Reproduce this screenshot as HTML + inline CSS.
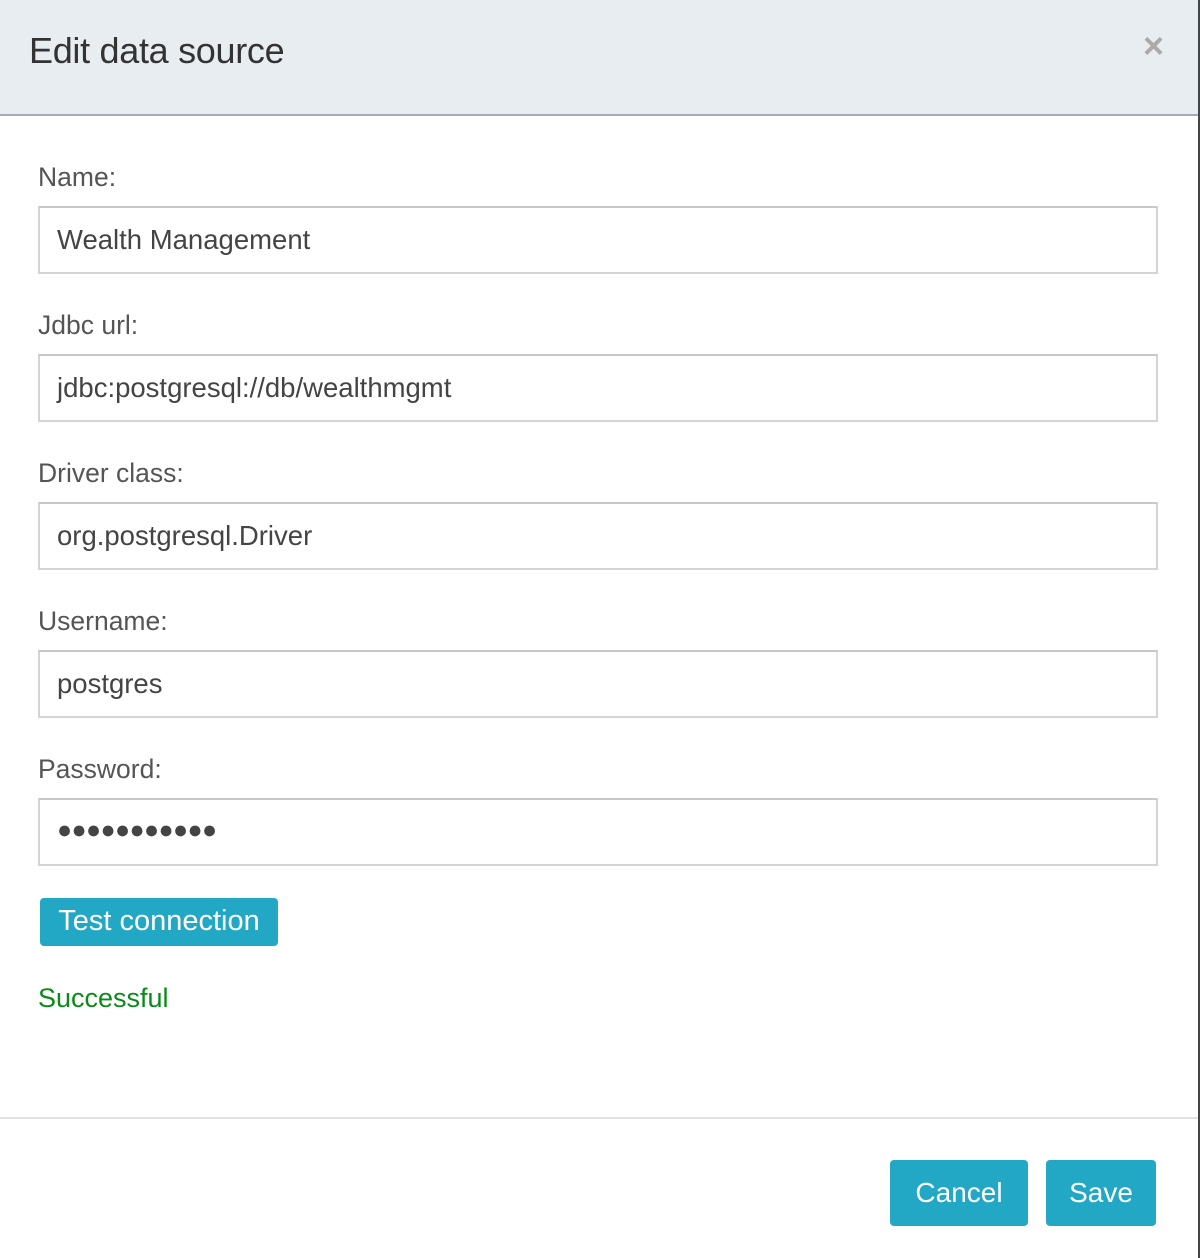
<!DOCTYPE html>
<html><head><style>
body{margin:0;width:1200px;height:1258px;background:#fff;font-family:"Liberation Sans",sans-serif;position:relative;overflow:hidden}
.hdr{position:absolute;left:0;top:0;width:1198px;height:114px;background:#e8edf1;border-bottom:2px solid #a3abb3}
.rb{position:absolute;right:0;top:0;width:2px;height:1258px;background:#444}
.title{position:absolute;left:29px;top:30px;font-size:36px;color:#333;letter-spacing:-0.3px}
.x{position:absolute;left:1143px;top:25px;font-size:36px;font-weight:bold;color:#aaa}
.lbl{position:absolute;left:38px;font-size:26.5px;color:#555}
.in{position:absolute;left:38px;width:1116px;height:64px;border:2px solid #d4d4d4;border-top-color:#c8c8c8;box-sizing:content-box}
.in span{position:absolute;left:17px;top:16px;font-size:27.5px;color:#444}
.btn{position:absolute;background:#22a7c4;color:#fff;border-radius:4px;text-align:center}
</style></head><body>
<div class="hdr"></div><div class="rb"></div>
<div class="title">Edit data source</div>
<div class="x">×</div>
<div class="lbl" style="top:162px">Name:</div>
<div class="in" style="top:206px"><span>Wealth Management</span></div>
<div class="lbl" style="top:310px">Jdbc url:</div>
<div class="in" style="top:354px"><span>jdbc:postgresql://db/wealthmgmt</span></div>
<div class="lbl" style="top:458px">Driver class:</div>
<div class="in" style="top:502px"><span>org.postgresql.Driver</span></div>
<div class="lbl" style="top:606px">Username:</div>
<div class="in" style="top:650px"><span>postgres</span></div>
<div class="lbl" style="top:754px">Password:</div>
<div class="in" style="top:798px"><span style="letter-spacing:-0.6px;top:16px;font-size:25px">●●●●●●●●●●●</span></div>
<div class="btn" style="left:40px;top:898px;width:238px;height:48px;line-height:47px;font-size:29px">Test connection</div>
<div class="lbl" style="top:983px;color:#0a8a18;font-size:27px">Successful</div>
<div style="position:absolute;left:0;top:1117px;width:1198px;height:2px;background:#e2e2e2"></div>
<div class="btn" style="left:890px;top:1160px;width:138px;height:66px;line-height:66px;font-size:28px">Cancel</div>
<div class="btn" style="left:1046px;top:1160px;width:110px;height:66px;line-height:66px;font-size:28px">Save</div>
</body></html>
